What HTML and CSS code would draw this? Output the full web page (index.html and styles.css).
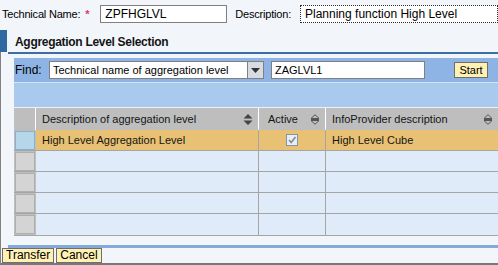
FILE: index.html
```html
<!DOCTYPE html>
<html lang="en">

<head>
    <meta charset="UTF-8">
    <title>Aggregation Level Selection</title>
    <link rel="stylesheet" href="styles.css">
</head>

<body>
    <div class="top-row">
        <span class="top-label">Technical Name:</span>
        <span class="required">*</span>
        <div class="top-input name-input">ZPFHGLVL</div>
        <span class="top-label desc-label">Description:</span>
        <div class="top-input desc-input">Planning function High Level</div>
    </div>

    <div class="title-row">
        <div class="title-mark"></div>
        <div class="title-text">Aggregation Level Selection</div>
    </div>

    <div class="frame">
        <div class="title-line"></div>

        <div class="content">
            <div class="find-bar">
                <span class="find-label">Find:</span>
                <div class="select-box">
                    <div class="select-text">Technical name of aggregation level</div>
                    <div class="select-btn">
                        <svg width="9" height="5" viewBox="0 0 9 5"><path d="M0 0 H9 L4.5 5 Z" fill="#333"/></svg>
                    </div>
                </div>
                <div class="find-input">ZAGLVL1</div>
                <button class="start-btn">Start</button>
            </div>
            <div class="toolbar-band"></div>

            <div class="grid">
                <div class="grid-row header-row">
                    <div class="sel-cell head-sel"></div>
                    <div class="cell col-desc head-cell">
                        <span>Description of aggregation level</span>
                        <svg class="sort-icon" width="10" height="11" viewBox="0 0 10 11"><path d="M5 0 L9.5 4.5 H0.5 Z M5 11 L9.5 6.5 H0.5 Z" fill="#444"/></svg>
                    </div>
                    <div class="cell col-active head-cell">
                        <span>Active</span>
                        <svg class="sort-icon" width="10" height="11" viewBox="0 0 10 11"><path d="M5 0.7 L9 4.5 H1 Z M5 10.3 L9 6.5 H1 Z" fill="none" stroke="#555" stroke-width="1"/><path d="M1 5.5 H9" stroke="#555" stroke-width="1"/></svg>
                    </div>
                    <div class="cell col-info head-cell">
                        <span>InfoProvider description</span>
                        <svg class="sort-icon" width="10" height="11" viewBox="0 0 10 11"><path d="M5 0.7 L9 4.5 H1 Z M5 10.3 L9 6.5 H1 Z" fill="none" stroke="#555" stroke-width="1"/><path d="M1 5.5 H9" stroke="#555" stroke-width="1"/></svg>
                    </div>
                </div>

                <div class="grid-row selected-row">
                    <div class="sel-cell"><div class="sel-box sel-box-on"></div></div>
                    <div class="cell col-desc">High Level Aggregation Level</div>
                    <div class="cell col-active center">
                        <div class="checkbox">
                            <svg width="10" height="10" viewBox="0 0 10 10"><path d="M2 5 L4.2 7.5 L8.5 2" fill="none" stroke="#7d8a99" stroke-width="1.6"/></svg>
                        </div>
                    </div>
                    <div class="cell col-info">High Level Cube</div>
                </div>

                <div class="grid-row">
                    <div class="sel-cell"><div class="sel-box"></div></div>
                    <div class="cell col-desc"></div>
                    <div class="cell col-active"></div>
                    <div class="cell col-info"></div>
                </div>
                <div class="grid-row">
                    <div class="sel-cell"><div class="sel-box"></div></div>
                    <div class="cell col-desc"></div>
                    <div class="cell col-active"></div>
                    <div class="cell col-info"></div>
                </div>
                <div class="grid-row">
                    <div class="sel-cell"><div class="sel-box"></div></div>
                    <div class="cell col-desc"></div>
                    <div class="cell col-active"></div>
                    <div class="cell col-info"></div>
                </div>
                <div class="grid-row">
                    <div class="sel-cell"><div class="sel-box"></div></div>
                    <div class="cell col-desc"></div>
                    <div class="cell col-active"></div>
                    <div class="cell col-info"></div>
                </div>
            </div>
        </div>

        <div class="bottom-line"></div>
        <div class="button-row">
            <button class="footer-btn">Transfer</button>
            <button class="footer-btn">Cancel</button>
        </div>
    </div>
</body>

</html>
```

FILE: styles.css
```css
body {
    margin: 0;
    width: 498px;
    height: 265px;
    overflow: hidden;
    background-color: rgb(242, 246, 251);
    font-family: "Liberation Sans", Arial, sans-serif;
    font-size: 11px;
    color: black;
}

.top-row {
    display: flex;
    align-items: center;
    height: 28px;
    padding-left: 2px;
}

.top-label {
    font-size: 11px;
    letter-spacing: -0.2px;
}

.required {
    color: rgb(220, 60, 100);
    font-weight: bold;
    margin-left: 5px;
    width: 15px;
}

.top-input {
    box-sizing: border-box;
    height: 18px;
    line-height: 16px;
    background-color: white;
    border: 1px solid rgb(128, 128, 128);
    padding-left: 4px;
    font-size: 12px;
}

.name-input {
    width: 127px;
}

.desc-label {
    margin-left: 8px;
}

.desc-input {
    flex: 1;
    margin-left: 9px;
    border: 1px dotted rgb(40, 40, 40);
}

.title-row {
    display: flex;
    height: 22px;
    margin-top: 2px;
}

.title-mark {
    width: 7px;
    background-color: rgb(46, 106, 160);
}

.title-text {
    padding-left: 8px;
    line-height: 24px;
    font-weight: bold;
    font-size: 12px;
    letter-spacing: -0.3px;
    color: rgb(20, 20, 20);
}

.frame {
    border-left: 1px solid rgb(130, 130, 130);
    border-bottom: 2px solid rgb(120, 120, 120);
    height: 213px;
    box-sizing: border-box;
}

.title-line {
    margin-left: 7px;
    height: 2px;
    background-color: rgb(58, 110, 165);
}

.content {
    margin-left: 13px;
    padding-top: 4px;
}

.find-bar {
    display: flex;
    align-items: center;
    height: 25px;
    background-color: rgb(141, 180, 228);
    border-bottom: 1px solid rgb(214, 228, 244);
    box-sizing: border-box;
}

.find-label {
    width: 34px;
    padding-left: 1px;
    font-size: 12px;
}

.select-box {
    display: flex;
    width: 215px;
    height: 18px;
    box-sizing: border-box;
    border: 1px solid rgb(128, 128, 128);
    background-color: white;
}

.select-text {
    flex: 1;
    padding-left: 3px;
    line-height: 16px;
    font-size: 11px;
}

.select-btn {
    width: 15px;
    display: flex;
    align-items: center;
    justify-content: center;
    background-color: rgb(214, 220, 226);
    border-left: 1px solid rgb(128, 128, 128);
}

.find-input {
    box-sizing: border-box;
    width: 154px;
    height: 18px;
    margin-left: 7px;
    padding-left: 3px;
    line-height: 16px;
    font-size: 11px;
    background-color: white;
    border: 1px solid rgb(128, 128, 128);
}

.start-btn {
    margin-left: 29px;
    height: 16px;
    width: 34px;
    padding: 0;
    font-family: "Liberation Sans", Arial, sans-serif;
    font-size: 11px;
    background-color: rgb(255, 240, 180);
    border: 1px solid rgb(110, 110, 110);
    border-radius: 0;
}

.toolbar-band {
    height: 24px;
    background-color: rgb(169, 201, 238);
    border-bottom: 1px solid rgb(236, 242, 250);
}

.grid {
    border-bottom: 1px solid rgb(165, 165, 165);
}

.grid-row {
    display: flex;
    height: 21px;
    box-sizing: border-box;
    border-bottom: 1px solid rgb(165, 165, 165);
    background-color: rgb(224, 235, 249);
}

.grid-row:last-child {
    border-bottom: none;
}

.header-row {
    height: 22px;
    background-color: rgb(190, 190, 190);
    border-bottom: none;
}

.selected-row {
    background-color: rgb(233, 193, 116);
}

.sel-cell {
    width: 22px;
    flex-shrink: 0;
    background-color: rgb(190, 190, 190);
    box-sizing: border-box;
    padding: 1px 1px 0 1px;
}

.head-sel {
    border-right: 1px solid white;
}

.sel-box {
    height: 19px;
    box-sizing: border-box;
    background-color: rgb(212, 212, 212);
    border: 1px solid rgb(175, 175, 175);
}

.sel-box-on {
    background-color: rgb(182, 214, 234);
    border: 1px solid rgb(140, 175, 205);
}

.cell {
    box-sizing: border-box;
    padding-left: 6px;
    line-height: 20px;
    font-size: 11px;
    color: rgb(20, 20, 20);
    border-right: 1px solid rgb(165, 165, 165);
}

.head-cell {
    display: flex;
    align-items: center;
    justify-content: space-between;
    padding-right: 5px;
    border-right: 1px solid white;
    font-size: 11px;
}

.col-desc {
    width: 223px;
}

.col-active {
    width: 67px;
}

.col-info {
    flex: 1;
    border-right: none;
}

.col-active.head-cell {
    padding-left: 9px;
}

.center {
    display: flex;
    align-items: center;
    justify-content: center;
    padding-left: 0;
}

.checkbox {
    width: 12px;
    height: 12px;
    box-sizing: border-box;
    border: 1px solid rgb(130, 150, 170);
    background-color: rgb(234, 238, 244);
    display: flex;
    align-items: center;
    justify-content: center;
}

.sort-icon {
    flex-shrink: 0;
}

.bottom-line {
    margin-top: 9px;
    margin-left: 7px;
    height: 3px;
    background-color: rgb(132, 170, 220);
}

.button-row {
    display: flex;
    gap: 2px;
    padding-left: 1px;
}

.footer-btn {
    height: 15px;
    padding: 0 3px;
    font-family: "Liberation Sans", Arial, sans-serif;
    font-size: 12px;
    line-height: 13px;
    background-color: rgb(255, 240, 180);
    border: 1px solid rgb(110, 110, 110);
    border-radius: 0;
    color: black;
}
```
